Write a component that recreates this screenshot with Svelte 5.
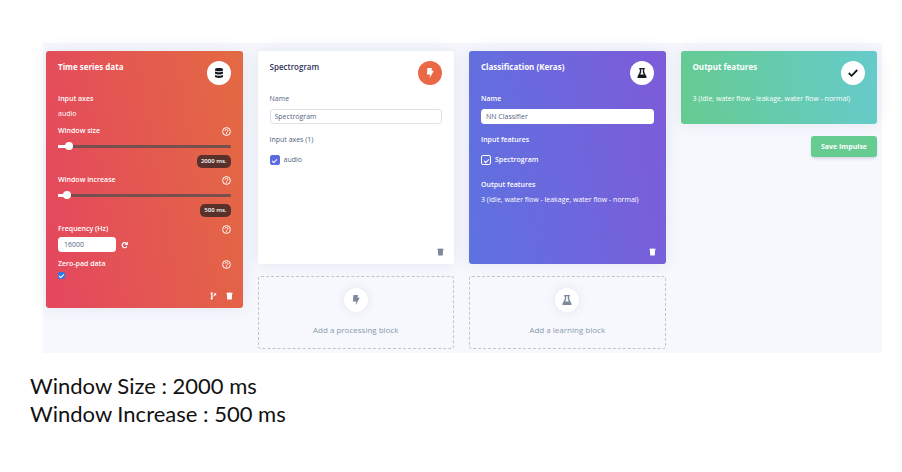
<script>
  let windowSize = $state(2000);
  let windowIncrease = $state(500);
  let frequency = $state('16000');
  let zeroPad = $state(true);
  let processingName = $state('Spectrogram');
  let learningName = $state('NN Classifier');
  let useAudio = $state(true);
  let useSpectrogram = $state(true);

  const sizeMax = 50000;
  const increaseMax = 16000;
  const classes = '3 (Idle, water flow - leakage, water flow - normal)';
</script>

{#snippet bolt()}
  <svg width="8" height="12" viewBox="0 0 8 12" aria-hidden="true">
    <path fill="currentColor" d="M1.400 1h4.600L5.500 3.800h2.300L3.600 11.300 4.100 7.400H.9z" />
  </svg>
{/snippet}

{#snippet flask()}
  <svg width="10" height="12" viewBox="0 0 10 12" aria-hidden="true">
    <path fill="currentColor" fill-rule="evenodd" d="M2.200 1h5.600v1.200H7.200v2.900l2.200 4.300c.5.9.1 1.600-.8 1.600H1.400c-.9 0-1.300-.7-.8-1.600L2.800 5.100V2.200h-.6zM4.200 2.200v3.200L3.200 7.400h3.600L5.800 5.400V2.200z" />
  </svg>
{/snippet}

{#snippet trash()}
  <svg width="7" height="8" viewBox="0 0 7 8" aria-hidden="true">
    <path fill="currentColor" d="M.5.8h1.800L2.600.4h1.800l.3.400h1.800v1.200H.5zM.9 1.800h5.200L5.800 7.500H1.200z" />
  </svg>
{/snippet}

{#snippet help(about)}
  <button type="button" class="icon" aria-label={'Help: ' + about}>
    <svg width="9" height="9" viewBox="0 0 9 9" fill="none" stroke="currentColor" aria-hidden="true">
      <circle cx="4.500" cy="4.500" r="3.900" />
      <path d="M3 3.700c.1-1.700 3-1.600 3 0 0 1-1.500.9-1.500 2M4.500 6.200v1" />
    </svg>
  </button>
{/snippet}

<main>
  <section class="panel" aria-label="Impulse design">
    <article class="card data">
      <header>
        <h2>Time series data</h2>
        <span class="badge dark">
          <svg width="10" height="12" viewBox="0 0 10 12" aria-hidden="true">
            <path fill="currentColor" d="M1 2.200C1 .7 9 .7 9 2.200v1C9 4.600 1 4.600 1 3.200zM1 4.600c1.800 1 6.200 1 8 0v2c-1.800 1.300-6.200 1.300-8 0zM1 7.900c1.800 1 6.200 1 8 0v1.900c0 1.500-8 1.500-8 0z" />
          </svg>
        </span>
      </header>
      <h3>Input axes</h3>
      <p class="axis">audio</p>

      <div class="row">
        <label for="size">Window size</label>
        {@render help('window size')}
      </div>
      <input id="size" type="range" min="0" max={sizeMax} step="100" bind:value={windowSize} style="--fill: {(windowSize / sizeMax) * 100 + 2}%" />
      <output for="size">{windowSize} ms.</output>

      <div class="row spaced">
        <label for="increase">Window increase</label>
        {@render help('window increase')}
      </div>
      <input id="increase" type="range" min="0" max={increaseMax} step="100" bind:value={windowIncrease} style="--fill: {(windowIncrease / increaseMax) * 100 + 2}%" />
      <output for="increase">{windowIncrease} ms.</output>

      <div class="row spaced">
        <label for="frequency">Frequency (Hz)</label>
        {@render help('frequency')}
      </div>
      <div class="frequency">
        <input id="frequency" type="text" bind:value={frequency} />
        <button type="button" class="icon" aria-label="Reset frequency">
          <svg width="7" height="8" viewBox="0 0 7 8" fill="none" stroke="currentColor" stroke-width="1.300" aria-hidden="true">
            <path d="M5.800 5.500A2.500 2.500 0 1 1 5.400 2.300" />
            <path d="M6.900.6v3.300H3.600z" fill="currentColor" stroke="none" />
          </svg>
        </button>
      </div>

      <div class="row spaced">
        <label for="zero">Zero-pad data</label>
        {@render help('zero-pad data')}
      </div>
      <input id="zero" class="tick small" type="checkbox" bind:checked={zeroPad} />

      <footer>
        <button type="button" class="icon" aria-label="Add version">
          <svg width="7" height="8" viewBox="0 0 7 8" fill="none" stroke="currentColor" aria-hidden="true">
            <path d="M1.700 1.500v5M1.700 5c.2-1.500 3.300-.6 3.300-2.500" />
            <path d="M.7.5h2v2h-2zM.7 5.500h2v2h-2zM4.200 1.300h2v2h-2z" fill="currentColor" stroke="none" />
          </svg>
        </button>
        <button type="button" class="icon" aria-label="Delete input block">{@render trash()}</button>
      </footer>
    </article>

    <div class="column">
      <article class="card processing">
        <header>
          <h2>Spectrogram</h2>
          <span class="badge orange">{@render bolt()}</span>
        </header>
        <label for="processing-name">Name</label>
        <input id="processing-name" class="name" type="text" bind:value={processingName} />
        <h3>Input axes (1)</h3>
        <label class="option"><input class="tick" type="checkbox" bind:checked={useAudio} />audio</label>
        <footer>
          <button type="button" class="icon" aria-label="Delete processing block">{@render trash()}</button>
        </footer>
      </article>
      <button type="button" class="add">
        <span class="badge">{@render bolt()}</span>
        Add a processing block
      </button>
    </div>

    <div class="column">
      <article class="card learning">
        <header>
          <h2>Classification (Keras)</h2>
          <span class="badge dark">{@render flask()}</span>
        </header>
        <label for="learning-name">Name</label>
        <input id="learning-name" class="name" type="text" bind:value={learningName} />
        <h3>Input features</h3>
        <label class="option"><input class="tick" type="checkbox" bind:checked={useSpectrogram} />Spectrogram</label>
        <h3>Output features</h3>
        <p class="classes">{classes}</p>
        <footer>
          <button type="button" class="icon" aria-label="Delete learning block">{@render trash()}</button>
        </footer>
      </article>
      <button type="button" class="add">
        <span class="badge">{@render flask()}</span>
        Add a learning block
      </button>
    </div>

    <div class="column">
      <article class="card result">
        <header>
          <h2>Output features</h2>
          <span class="badge dark">
            <svg width="10" height="10" viewBox="0 0 10 10" fill="none" stroke="currentColor" stroke-width="1.800" aria-hidden="true">
              <path d="M.8 5l2.800 2.800L9.200 2" />
            </svg>
          </span>
        </header>
        <p class="classes">{classes}</p>
      </article>
      <button type="button" class="save">Save Impulse</button>
    </div>
  </section>

  <section class="notes">
    <p>Window Size : 2000 ms</p>
    <p>Window Increase : 500 ms</p>
  </section>
</main>

<style>
  :global(body) {
    margin: 0;
    background: #fff;
  }

  main,
  main :global(*) {
    box-sizing: border-box;
  }

  main {
    padding: 43px 20px 20px 30px;
    font-family: 'Open Sans', sans-serif;
  }

  h2,
  h3,
  p {
    margin: 0;
  }

  button,
  input {
    font-family: inherit;
  }

  .panel {
    display: grid;
    grid-template-columns: repeat(4, minmax(0, 1fr));
    align-items: start;
    gap: 15px;
    margin-left: 13px;
    padding: 8px 5px 4px 3px;
    background: #f7f8fe;
  }

  .column {
    display: flex;
    flex-direction: column;
    gap: 12px;
  }

  .card {
    display: flex;
    flex-direction: column;
    padding: 10px 12px 8px;
    border-radius: 3px;
    color: #fff;
    font-size: 7px;
    line-height: 12px;
    box-shadow: 0 0 16px rgba(136, 152, 170, 0.18);
  }

  .data {
    background: linear-gradient(80deg, #e4465f, #e36a42);
  }

  .processing,
  .learning {
    min-height: 213px;
  }

  .processing {
    background: #fff;
    color: #525f7f;
  }

  .learning {
    background: linear-gradient(80deg, #5e72e0, #7d5bd9);
  }

  .result {
    min-height: 73px;
    background: linear-gradient(80deg, #65cb90, #66cbcb);
  }

  header {
    display: flex;
    justify-content: space-between;
    margin-bottom: 8px;
  }

  h2 {
    font-size: 8px;
    font-weight: 700;
    line-height: 12px;
  }

  .processing h2 {
    color: #32325d;
    font-weight: 600;
  }

  h3,
  label {
    font-size: 7px;
    font-weight: 600;
    line-height: 12px;
  }

  .processing h3,
  .processing label {
    font-weight: 400;
  }

  .badge {
    display: grid;
    place-items: center;
    width: 24px;
    height: 24px;
    border-radius: 50%;
    background: #fff;
    color: #7d8a9c;
  }

  .dark {
    color: #16191f;
  }

  .orange {
    background: #ea6846;
    color: #fff;
  }

  .icon {
    display: flex;
    padding: 0;
    border: 0;
    background: none;
    color: inherit;
  }

  .axis {
    margin-top: 3px;
  }

  .row {
    display: flex;
    align-items: center;
    justify-content: space-between;
    margin-top: 5px;
  }

  .spaced {
    margin-top: 6px;
  }

  input[type='range'] {
    appearance: none;
    width: 100%;
    height: 8px;
    margin: 5px 0;
    background: linear-gradient(to right, #fff var(--fill), #75504f var(--fill)) center / 100% 3px no-repeat;
  }

  input[type='range']::-webkit-slider-thumb {
    appearance: none;
    width: 8px;
    height: 8px;
    border-radius: 50%;
    background: #fff;
  }

  output {
    align-self: flex-end;
    padding: 0 4px;
    border-radius: 5px;
    background: #58312b;
    font-size: 6px;
    font-weight: 600;
    line-height: 13px;
  }

  input[type='text'] {
    padding: 0 5px;
    border: 1px solid #fff;
    border-radius: 3px;
    background: #fff;
    color: #525f7f;
    font-size: 7px;
    line-height: 12px;
  }

  .frequency {
    display: flex;
    align-items: center;
    gap: 5px;
    margin-top: 2px;
  }

  .frequency input {
    width: 58px;
    height: 15px;
  }

  .name {
    width: 100%;
    height: 15px;
    margin: 4px 0 10px;
  }

  input.name {
    padding: 0 4px;
  }

  .processing .name {
    border-color: #dee2e6;
  }

  .option {
    display: flex;
    align-items: center;
    gap: 4px;
    margin: 8px 0 13px;
  }

  .tick {
    appearance: none;
    display: grid;
    place-items: center;
    width: 10px;
    height: 10px;
    margin: 0;
    border: 1px solid #fff;
    border-radius: 2px;
  }

  .processing .tick {
    border-color: #5e6be0;
    background: #5e6be0;
  }

  .small {
    width: 7px;
    height: 7px;
    margin-top: 2px;
    border: 0;
    background: #2878e8;
  }

  .tick:checked::after {
    content: '';
    width: 4px;
    height: 2px;
    border: solid #fff;
    border-width: 0 0 1px 1px;
    transform: rotate(-45deg);
  }

  .classes {
    margin-top: 3px;
    white-space: nowrap;
  }

  .result .classes {
    margin-top: 0;
  }

  footer {
    display: flex;
    justify-content: flex-end;
    gap: 9px;
    margin: auto -2px 0 0;
  }

  .data footer {
    margin-top: 13px;
  }

  .processing footer {
    color: #7d8a9c;
  }

  .add {
    display: flex;
    flex-direction: column;
    align-items: center;
    gap: 11px;
    padding: 11px 12px;
    border: 1px dashed #c0c4cc;
    border-radius: 3px;
    background: none;
    color: #8898aa;
    font-size: 8px;
    line-height: 14px;
  }

  .add .badge {
    box-shadow: 0 0 10px rgba(136, 152, 170, 0.2);
  }

  .save {
    align-self: flex-end;
    padding: 0 10px;
    border: 0;
    border-radius: 3px;
    background: #65cb90;
    box-shadow: 0 2px 3px rgba(50, 50, 93, 0.15);
    color: #fff;
    font-size: 7px;
    font-weight: 700;
    line-height: 21px;
  }

  .notes {
    margin-top: 19px;
    color: #111;
    font-family: Lato, sans-serif;
    font-size: 22px;
    line-height: 28px;
  }
</style>
